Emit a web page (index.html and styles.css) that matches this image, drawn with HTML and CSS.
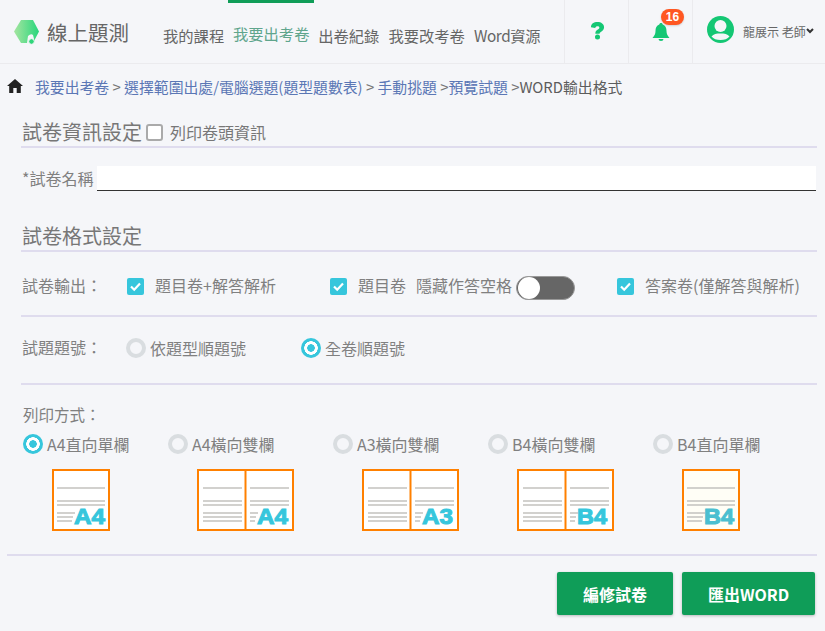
FILE: index.html
```html
<!DOCTYPE html>
<html lang="zh-Hant">
<head>
<meta charset="utf-8">
<title>線上題測</title>
<link rel="stylesheet" href="styles.css">
</head>
<body>
<header class="topbar">
  <div class="brand">
    <svg class="brand-mark" viewBox="0 0 26 26" width="26" height="26">
      <defs><linearGradient id="lg" x1="0" x2="1" y1="0" y2="0"><stop offset="0" stop-color="#a5e5a0"/><stop offset="1" stop-color="#28d67c"/></linearGradient></defs>
      <path d="M7 1h12l6 11.500L19 24H7L0 12.500z" fill="url(#lg)"/>
      <path d="M13 24l1-7q3-3 5-1l1 4-2 4z" fill="#f5f6f9"/>
      <circle cx="17.500" cy="22.500" r="2.800" fill="#2fd67a" stroke="#f5f6f9" stroke-width="1"/>
    </svg>
    <span class="brand-name">線上題測</span>
  </div>
  <nav class="nav">
    <a class="nav-item first">我的課程</a>
    <a class="nav-item active">我要出考卷</a>
    <a class="nav-item">出卷紀錄</a>
    <a class="nav-item">我要改考卷</a>
    <a class="nav-item word">Word資源</a>
  </nav>
  <div class="tool help">
    <svg viewBox="0 0 16 20" width="15" height="19"><path d="M1 6.500C1 3 4 1 8 1s7 2.200 7 5.500c0 3-2 4-3.500 5-1 .7-1.200 1-1.200 2H5.700c0-2.300.7-3.300 2.300-4.300 1.300-.8 2-1.200 2-2.300 0-1-1-1.500-2-1.500-1.300 0-2 .7-2.500 2z" fill="#14c774"/><circle cx="8" cy="17" r="2.700" fill="#14c774"/></svg>
  </div>
  <div class="tool bell">
    <svg viewBox="0 0 18 18" width="18" height="18"><path d="M9 0c1 0 1.600.7 1.700 1.500C13.500 2.300 14.500 5 14.500 8c0 3 1 4.500 3 7H.5c2-2.500 3-4 3-7 0-3 1-5.700 3.800-6.500C7.400.7 8 0 9 0z" fill="#14c774"/><path d="M6.500 16h5a2.500 2 0 0 1-5 0z" fill="#14c774"/></svg>
    <span class="badge">16</span>
  </div>
  <div class="user">
    <svg viewBox="0 0 27 27" width="27" height="27"><circle cx="13.500" cy="13.500" r="13.500" fill="#14c774"/><circle cx="13.500" cy="10" r="6" fill="#f5f6f9"/><path d="M4.500 20.500c2-2.500 5-3 9-3s7 .5 9 3c-2 2.500-5 3.500-9 3.500s-7-1-9-3.500z" fill="#f5f6f9"/></svg>
    <span class="user-name">龍展示 老師</span>
    <svg class="chevron" viewBox="0 0 8 6" width="8" height="6"><path d="M1 1l3 3 3-3" fill="none" stroke="#333" stroke-width="2"/></svg>
  </div>
</header>

<div class="crumbs">
  <svg class="home" viewBox="0 0 16 14" width="16" height="14"><path d="M8 0l8 7h-2.200v7H9.700V9H6.300v5H2.200V7H0z" fill="#222"/></svg>
  <span class="crumb-text"><a>我要出考卷</a> &gt; <a>選擇範圍出處/電腦選題(題型題數表)</a> &gt; <a>手動挑題</a> &gt;<a>預覽試題</a> &gt;<span class="current">WORD輸出格式</span></span>
</div>

<main class="main">
  <div class="section-title first">
    <h2>試卷資訊設定</h2>
    <span class="box"></span>
    <span class="print-head">列印卷頭資訊</span>
  </div>
  <div class="name-row">
    <label>*試卷名稱</label>
    <div class="name-input"></div>
  </div>

  <div class="section-title second"><h2>試卷格式設定</h2></div>

  <div class="row output-row">
    <span class="row-label">試卷輸出：</span>
    <span class="check c1"><svg viewBox="0 0 17 17" width="17" height="17"><rect width="17" height="17" rx="2" fill="#36c6dc"/><path d="M4 8.500l3.200 3.200L13 5.500" fill="none" stroke="#fff" stroke-width="2.200"/></svg>題目卷+解答解析</span>
    <span class="check c2"><svg viewBox="0 0 17 17" width="17" height="17"><rect width="17" height="17" rx="2" fill="#36c6dc"/><path d="M4 8.500l3.200 3.200L13 5.500" fill="none" stroke="#fff" stroke-width="2.200"/></svg>題目卷</span>
    <span class="hide-label">隱藏作答空格</span>
    <span class="toggle"><span class="knob"></span></span>
    <span class="check c3"><svg viewBox="0 0 17 17" width="17" height="17"><rect width="17" height="17" rx="2" fill="#36c6dc"/><path d="M4 8.500l3.200 3.200L13 5.500" fill="none" stroke="#fff" stroke-width="2.200"/></svg>答案卷(僅解答與解析)</span>
  </div>

  <div class="row number-row">
    <span class="row-label">試題題號：</span>
    <span class="radio-wrap n1"><span class="radio"></span>依題型順題號</span>
    <span class="radio-wrap n2"><span class="radio on"></span>全卷順題號</span>
  </div>

  <div class="print">
    <div class="print-label">列印方式：</div>
    <div class="print-grid">
      <div class="opt">
        <span class="radio-wrap"><span class="radio on"></span>A4直向單欄</span>
        <svg class="paper" viewBox="0 0 58 62" width="58" height="62">
          <rect x="1" y="1" width="56" height="60" fill="#fff" stroke="#ff8000" stroke-width="2"/>
          <path d="M5 19h48M5 32h48M5 36h48M5 44h18M5 48h16M5 52h15" stroke="#c4c2be" stroke-width="1.500"/>
          <text x="22" y="55" textLength="31" lengthAdjust="spacingAndGlyphs" class="paper-text">A4</text>
        </svg>
      </div>
      <div class="opt">
        <span class="radio-wrap"><span class="radio"></span>A4橫向雙欄</span>
        <svg class="paper" viewBox="0 0 97 62" width="97" height="62">
          <rect x="1" y="1" width="95" height="60" fill="#fff" stroke="#ff8000" stroke-width="2"/>
          <path d="M48.500 1v60" stroke="#ff8000" stroke-width="2"/>
          <path d="M6 19h39M6 32h39M6 36h39M6 44h39M6 48h39M6 52h39M53 19h39M53 32h39M53 36h39M53 44h8M53 48h6M53 52h5" stroke="#c4c2be" stroke-width="1.500"/>
          <text x="60" y="55" textLength="31" lengthAdjust="spacingAndGlyphs" class="paper-text">A4</text>
        </svg>
      </div>
      <div class="opt">
        <span class="radio-wrap"><span class="radio"></span>A3橫向雙欄</span>
        <svg class="paper" viewBox="0 0 97 62" width="97" height="62">
          <rect x="1" y="1" width="95" height="60" fill="#fff" stroke="#ff8000" stroke-width="2"/>
          <path d="M48.500 1v60" stroke="#ff8000" stroke-width="2"/>
          <path d="M6 19h39M6 32h39M6 36h39M6 44h39M6 48h39M6 52h39M53 19h39M53 32h39M53 36h39M53 44h8M53 48h6M53 52h5" stroke="#c4c2be" stroke-width="1.500"/>
          <text x="60" y="55" textLength="31" lengthAdjust="spacingAndGlyphs" class="paper-text">A3</text>
        </svg>
      </div>
      <div class="opt">
        <span class="radio-wrap"><span class="radio"></span>B4橫向雙欄</span>
        <svg class="paper" viewBox="0 0 97 62" width="97" height="62">
          <rect x="1" y="1" width="95" height="60" fill="#fff" stroke="#ff8000" stroke-width="2"/>
          <path d="M48.500 1v60" stroke="#ff8000" stroke-width="2"/>
          <path d="M6 19h39M6 32h39M6 36h39M6 44h39M6 48h39M6 52h39M53 19h39M53 32h39M53 36h39M53 44h8M53 48h6M53 52h5" stroke="#c4c2be" stroke-width="1.500"/>
          <text x="60" y="55" textLength="30" lengthAdjust="spacingAndGlyphs" class="paper-text">B4</text>
        </svg>
      </div>
      <div class="opt">
        <span class="radio-wrap"><span class="radio"></span>B4直向單欄</span>
        <svg class="paper" viewBox="0 0 58 62" width="58" height="62">
          <rect x="1" y="1" width="56" height="60" fill="#fffef6" stroke="#ff8000" stroke-width="2"/>
          <path d="M5 19h48M5 32h48M5 36h48M5 44h18M5 48h16M5 52h15" stroke="#c4c2be" stroke-width="1.500"/>
          <text x="22" y="55" textLength="30" lengthAdjust="spacingAndGlyphs" class="paper-text dim">B4</text>
        </svg>
      </div>
    </div>
  </div>
</main>

<footer class="actions">
  <button class="btn edit">編修試卷</button>
  <button class="btn export">匯出WORD</button>
</footer>
</body>
</html>
```

FILE: styles.css
```css
* { box-sizing: border-box; }
html, body { margin: 0; padding: 0; }
body {
  width: 825px;
  height: 631px;
  overflow: hidden;
  background: #f5f6f9;
  color: #808080;
  font-family: "Noto Sans CJK TC", "Noto Sans", sans-serif;
  font-size: 16px;
}

/* header */
.topbar {
  height: 64px;
  display: flex;
  align-items: stretch;
  border-bottom: 1px solid #ebebee;
}
.brand {
  width: 159px;
  padding-left: 14px;
  display: flex;
  align-items: center;
}
.brand-mark { flex: none; margin-top: 1px; }
.brand-name {
  margin-left: 7px;
  font-size: 20.500px;
  color: #666;
  line-height: 28px;
}
.nav {
  display: flex;
  width: 405px;
  font-size: 15.300px;
  color: #666;
}
.nav-item {
  display: flex;
  align-items: center;
  height: 63px;
  padding: 3px 5px 0 4px;
  border-top: 3px solid transparent;
  white-space: nowrap;
}
.nav-item.first { padding-right: 4px; }
.nav-item.word { letter-spacing: -.4px; }
.nav-item.active {
  border-top-color: #0f9d58;
  color: #5fa58c;
  padding: 0;
  width: 86px;
  flex: none;
  justify-content: center;
}
.tool {
  position: relative;
  width: 64px;
  border-left: 1px solid #ebebee;
  display: flex;
  align-items: center;
  justify-content: center;
}
.tool svg { margin-bottom: 2px; }
.tool.help svg { margin-left: 2px; }
.tool.bell svg { margin-bottom: 0; }
.badge {
  position: absolute;
  left: 32px;
  top: 9px;
  width: 23px;
  height: 16px;
  border-radius: 8px;
  background: #ff5722;
  color: #fff;
  font: bold 12px/16px "Liberation Sans", sans-serif;
  text-align: center;
  box-shadow: 0 1px 2px rgba(0,0,0,.15);
}
.user {
  flex: 1;
  border-left: 1px solid #ebebee;
  display: flex;
  align-items: center;
  padding-left: 14px;
}
.user svg { margin-bottom: 4px; }
.user-name { margin-left: 9px; font-size: 12px; color: #666; line-height: 18px; margin-top: 1px; }
.chevron { flex: none; }
.user .chevron { margin-bottom: 2px; }

/* breadcrumb */
.crumbs {
  display: flex;
  align-items: center;
  height: 24px;
  margin-top: 10px;
  padding-left: 7px;
  font-size: 14.850px;
  color: #777;
  white-space: nowrap;
}
.home { flex: none; margin-right: 12px; }
.crumb-text a { color: #5b77b5; }
.current { color: #5c5c5c; }

/* main */
.main { padding: 0 8px 0 21px; }
.section-title {
  display: flex;
  align-items: center;
  border-bottom: 2px solid #dfdcee;
  height: 36px;
  padding: 5px 0 0 1px;
}
.section-title h2 {
  margin: 0;
  font-size: 20px;
  font-weight: 400;
  line-height: 28px;
  color: #777;
}
.section-title.first { margin-top: 14px; }
.section-title.second { margin-top: 25px; padding-top: 6px; }
.box {
  width: 17px;
  height: 17px;
  margin: 2px 7px 0 4px;
  border: 2px solid #aaa;
  border-radius: 3px;
  background: #fff;
}
.print-head { font-size: 16px; margin-top: 1px; color: #777; }

.name-row {
  display: flex;
  align-items: center;
  margin-top: 18px;
  padding-left: 1px;
}
.name-row label { width: 75px; font-size: 16px; line-height: 25px; color: #808080; }
.name-input {
  flex: 1;
  height: 25px;
  margin-right: 1px;
  background: #fff;
  border-bottom: 1px solid #333;
}

.row {
  display: flex;
  align-items: center;
  border-bottom: 2px solid #dfdcee;
  padding-left: 1px;
}
.row-label { width: 104px; flex: none; }
.output-row { height: 65px; padding-top: 2px; }
.output-row .row-label { width: 105px; }
.number-row { height: 68px; padding-bottom: 4px; }
.number-row .row-label { margin-top: -3px; }
.check { display: inline-flex; align-items: center; }
.check svg { margin: 4px 11px 0 0; flex: none; }
.c1 { width: 203px; }
.c2 { width: 86px; }
.hide-label { width: 100px; }
.toggle {
  width: 59px;
  height: 24px;
  flex: none;
  margin-top: 6px;
  border-radius: 12px;
  background: #666;
  border: 1px solid #999;
  display: flex;
  align-items: center;
  padding-left: 1px;
}
.knob {
  width: 22px;
  height: 22px;
  border-radius: 50%;
  background: #fff;
}
.c3 { margin-left: 42px; white-space: nowrap; }

.radio-wrap { display: inline-flex; align-items: center; white-space: nowrap; }
.radio {
  width: 20px;
  height: 20px;
  flex: none;
  margin-right: 4px;
  border-radius: 50%;
  border: 4px solid #d9dde0;
  background: #f5f6f9;
}
.radio.on {
  border: 0;
  background: radial-gradient(circle, #36c6dc 0 3.500px, #fff 4px 6.500px, #36c6dc 7px);
}
.n1 { width: 175px; }

.print { padding-left: 2px; }
.print-label { margin-top: 17px; line-height: 24px; font-size: 15.500px; }
.print-grid {
  display: grid;
  grid-template-columns: 145px 165px 155px 165px 1fr;
  margin-top: 6px;
}
.opt { display: flex; flex-direction: column; align-items: flex-start; }
.opt .radio-wrap { line-height: 24px; }
.paper { margin: 13px 0 0 29px; display: block; }
.paper-text {
  font-family: "Liberation Sans", sans-serif;
  font-weight: 700;
  font-size: 22px;
  fill: #36c6dc;
  stroke: #36c6dc;
  stroke-width: 1px;
}
.paper-text.dim { fill: #4bbfd0; stroke: #4bbfd0; }

/* footer */
.actions {
  margin: 23px 8px 0 7px;
  border-top: 2px solid #dfdcee;
  padding: 16px 2px 0 0;
  display: flex;
  justify-content: flex-end;
  gap: 9px;
}
.btn {
  height: 43px;
  border: 0;
  border-radius: 2px;
  background: #0f9d58;
  color: #fff;
  font: 700 16px "Noto Sans CJK TC", "Noto Sans", sans-serif;
  box-shadow: 0 1px 3px rgba(0,0,0,.25);
}
.edit { width: 116px; }
.export { width: 133px; }
```
